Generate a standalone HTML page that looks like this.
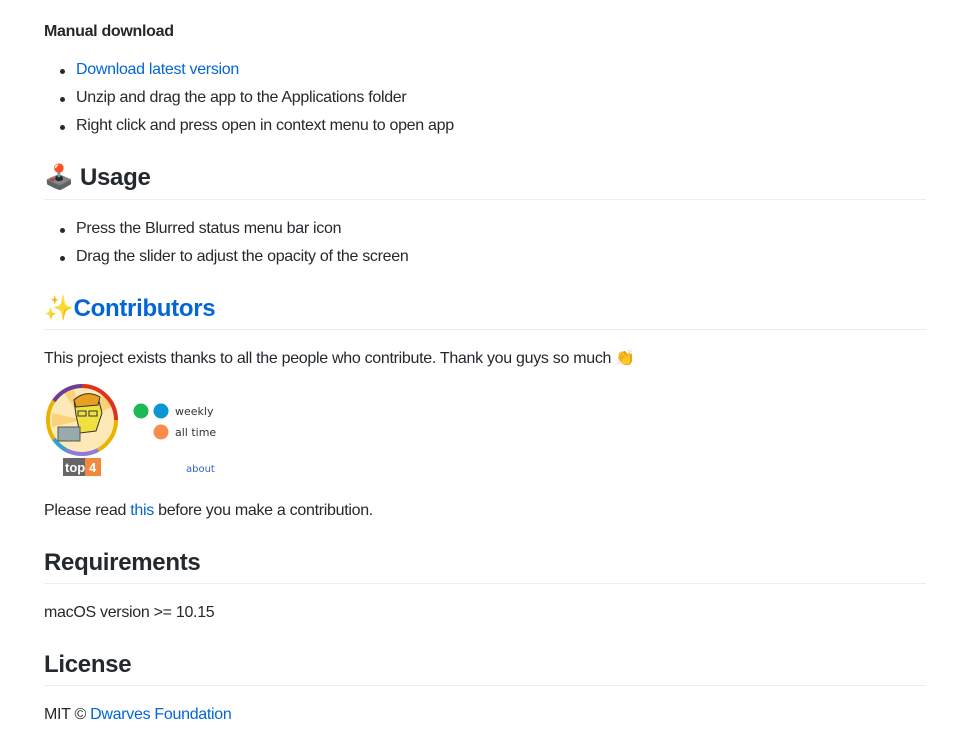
<!DOCTYPE html>
<html><head><meta charset="utf-8"><style>
body{margin:0;width:969px;height:749px;background:#fff;font-family:"Liberation Sans",sans-serif;color:#24292e;position:relative;overflow:hidden}
.t{position:absolute;left:44px;font-size:16px;line-height:20px;height:20px;white-space:nowrap;letter-spacing:-0.3px}
.li{left:76px}
.li:before{content:"";position:absolute;left:-16px;top:9px;width:5px;height:5px;border-radius:50%;background:#24292e}
.h{position:absolute;left:44px;font-size:24px;font-weight:bold;line-height:30px;white-space:nowrap;letter-spacing:-0.3px}
.hr{position:absolute;left:44px;width:882px;height:1px;background:#eaecef}
a{color:#0366d6;text-decoration:none}
</style></head><body>
<div class="t" style="top:22px;font-weight:bold">Manual download</div>
<div class="t li" style="top:60px"><a>Download latest version</a></div>
<div class="t li" style="top:88px">Unzip and drag the app to the Applications folder</div>
<div class="t li" style="top:116px">Right click and press open in context menu to open app</div>

<div class="h" style="top:163px"><span style="font-size:24px">🕹️</span> Usage</div>
<div class="hr" style="top:199px"></div>
<div class="t li" style="top:219px">Press the Blurred status menu bar icon</div>
<div class="t li" style="top:247px">Drag the slider to adjust the opacity of the screen</div>

<div class="h" style="top:294px;left:44px"><span style="color:#f5c518">✨</span><a>Contributors</a></div>
<div class="hr" style="top:329px"></div>
<div class="t" style="top:349px">This project exists thanks to all the people who contribute. Thank you guys so much 👏</div>

<svg style="position:absolute;left:44px;top:383px" width="180" height="96" viewBox="0 0 180 96">
<circle cx="38" cy="37" r="32" fill="#fde9b8"/>
<path d="M38 37 L20 10 L30 6 Z M38 37 L60 12 L68 24 Z M38 37 L8 30 L8 44 Z" fill="#fbd27a"/>
<circle cx="38" cy="37" r="34" fill="none" stroke="#e8b400" stroke-width="4"/>
<path d="M38 3 A34 34 0 0 1 72 37" fill="none" stroke="#e0301e" stroke-width="4"/>
<path d="M10 18 A34 34 0 0 1 38 3" fill="none" stroke="#6a3d9a" stroke-width="4"/>
<path d="M22 67 A34 34 0 0 0 54 67" fill="none" stroke="#8c7ae6" stroke-width="4"/>
<path d="M10 56 A34 34 0 0 0 22 67" fill="none" stroke="#2aa5d8" stroke-width="4"/>
<path d="M30 17 Q40 8 54 14 L58 30 L52 48 L36 50 L32 32 Z" fill="#f0e040" stroke="#333" stroke-width="1"/>
<path d="M30 17 Q42 6 56 14 L54 22 L32 24 Z" fill="#e8a020" stroke="#333" stroke-width="1"/>
<rect x="34" y="28" width="8" height="5" fill="none" stroke="#333"/><rect x="45" y="28" width="8" height="5" fill="none" stroke="#333"/>
<rect x="14" y="44" width="22" height="14" fill="#9aa" stroke="#555"/>
<rect x="19" y="75" width="38" height="18" fill="#666"/>
<rect x="41" y="75" width="16" height="18" fill="#f0883e"/>
<text x="21" y="89" fill="#fff" font-family="Liberation Sans,sans-serif" font-weight="bold" font-size="13">top</text>
<text x="45" y="89" fill="#fff" font-family="Liberation Sans,sans-serif" font-weight="bold" font-size="13">4</text>
<circle cx="97" cy="28" r="7.5" fill="#1db954"/>
<circle cx="117" cy="28" r="7.5" fill="#0a95d5"/>
<circle cx="117" cy="49" r="7.5" fill="#f88c4c"/>
<text x="131" y="32" fill="#333" font-family="DejaVu Sans,sans-serif" font-size="11">weekly</text>
<text x="131" y="53" fill="#333" font-family="DejaVu Sans,sans-serif" font-size="11">all time</text>
<text x="142" y="89" fill="#3366cc" font-family="DejaVu Sans,sans-serif" font-size="10">about</text>
</svg>

<div class="t" style="top:501px">Please read <a>this</a> before you make a contribution.</div>

<div class="h" style="top:548px">Requirements</div>
<div class="hr" style="top:583px"></div>
<div class="t" style="top:603px">macOS version &gt;= 10.15</div>

<div class="h" style="top:650px">License</div>
<div class="hr" style="top:685px"></div>
<div class="t" style="top:705px">MIT © <a>Dwarves Foundation</a></div>
</body></html>
